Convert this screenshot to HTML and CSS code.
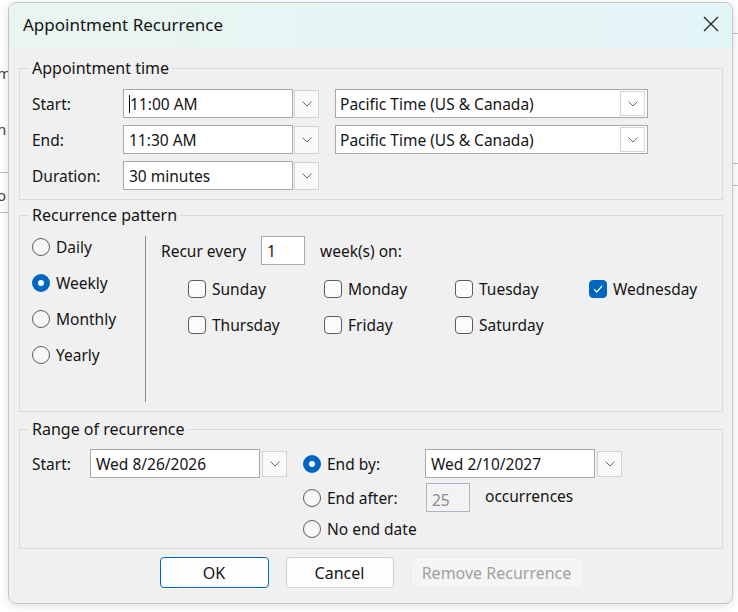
FILE: index.html
```html
<!DOCTYPE html>
<html lang="en">
<head>
    <meta charset="UTF-8">
    <meta name="viewport" content="width=device-width, initial-scale=1.0">
    <title>Appointment Recurrence</title>
    <link rel="stylesheet" href="styles.css">
</head>
<body>
    <!-- bits of the Outlook window behind the dialog -->
    <div class="backdrop">
        <span class="peek peek-1">m</span>
        <span class="peek peek-2">n</span>
        <span class="peek peek-3">o</span>
        <span class="rule rule-l1"></span>
        <span class="rule rule-l2"></span>
        <span class="rule rule-r1"></span>
        <span class="rule rule-r2"></span>
        <span class="rule rule-r3"></span>
    </div>

    <div class="dialog">
        <div class="titlebar">
            <span class="title">Appointment Recurrence</span>
            <span class="close-btn">
                <svg width="16" height="16" viewBox="0 0 16 16"><path d="M1 1L15 15M15 1L1 15" stroke="#222" stroke-width="1.3" fill="none"/></svg>
            </span>
        </div>

        <div class="dialog-body">
            <fieldset class="group group-time">
                <legend>Appointment time</legend>
                <div class="time-row">
                    <span class="row-label">Start:</span>
                    <span class="field field-time"><span class="caret"></span>11:00 AM</span>
                    <span class="drop-btn"><svg width="10" height="6" viewBox="0 0 10 6"><path d="M0.5 0.5L5 5L9.5 0.5" stroke="#6b6b6b" fill="none"/></svg></span>
                    <span class="tz-combo">Pacific Time (US &amp; Canada)
                        <span class="tz-drop"><svg width="10" height="6" viewBox="0 0 10 6"><path d="M0.5 0.5L5 5L9.5 0.5" stroke="#6b6b6b" fill="none"/></svg></span>
                    </span>
                </div>
                <div class="time-row">
                    <span class="row-label">End:</span>
                    <span class="field field-time">11:30 AM</span>
                    <span class="drop-btn"><svg width="10" height="6" viewBox="0 0 10 6"><path d="M0.5 0.5L5 5L9.5 0.5" stroke="#6b6b6b" fill="none"/></svg></span>
                    <span class="tz-combo">Pacific Time (US &amp; Canada)
                        <span class="tz-drop"><svg width="10" height="6" viewBox="0 0 10 6"><path d="M0.5 0.5L5 5L9.5 0.5" stroke="#6b6b6b" fill="none"/></svg></span>
                    </span>
                </div>
                <div class="time-row">
                    <span class="row-label">Duration:</span>
                    <span class="field field-time">30 minutes</span>
                    <span class="drop-btn"><svg width="10" height="6" viewBox="0 0 10 6"><path d="M0.5 0.5L5 5L9.5 0.5" stroke="#6b6b6b" fill="none"/></svg></span>
                </div>
            </fieldset>

            <fieldset class="group group-pattern">
                <legend>Recurrence pattern</legend>
                <div class="pattern">
                    <div class="pattern-kinds">
                        <span class="radio-row"><span class="radio"></span>Daily</span>
                        <span class="radio-row"><span class="radio checked"></span>Weekly</span>
                        <span class="radio-row"><span class="radio"></span>Monthly</span>
                        <span class="radio-row"><span class="radio"></span>Yearly</span>
                    </div>
                    <div class="divider"></div>
                    <div class="pattern-detail">
                        <div class="recur-row">
                            <span class="recur-label">Recur every</span>
                            <span class="field field-small">1</span>
                            <span class="recur-unit">week(s) on:</span>
                        </div>
                        <div class="days">
                            <span class="check-row"><span class="checkbox"></span>Sunday</span>
                            <span class="check-row"><span class="checkbox"></span>Monday</span>
                            <span class="check-row"><span class="checkbox"></span>Tuesday</span>
                            <span class="check-row"><span class="checkbox checked"><svg width="12" height="10" viewBox="0 0 12 10"><path d="M2 5.2L4.8 8L10 2" stroke="#fff" stroke-width="1.2" fill="none"/></svg></span>Wednesday</span>
                            <span class="check-row"><span class="checkbox"></span>Thursday</span>
                            <span class="check-row"><span class="checkbox"></span>Friday</span>
                            <span class="check-row"><span class="checkbox"></span>Saturday</span>
                        </div>
                    </div>
                </div>
            </fieldset>

            <fieldset class="group group-range">
                <legend>Range of recurrence</legend>
                <div class="range">
                    <div class="range-start">
                        <span class="range-label">Start:</span>
                        <span class="field field-date">Wed 8/26/2026</span>
                        <span class="drop-btn drop-date"><svg width="10" height="6" viewBox="0 0 10 6"><path d="M0.5 0.5L5 5L9.5 0.5" stroke="#6b6b6b" fill="none"/></svg></span>
                    </div>
                    <div class="range-end">
                        <div class="end-row">
                            <span class="radio-row end-choice"><span class="radio checked"></span>End by:</span>
                            <span class="field field-date">Wed 2/10/2027</span>
                            <span class="drop-btn drop-date"><svg width="10" height="6" viewBox="0 0 10 6"><path d="M0.5 0.5L5 5L9.5 0.5" stroke="#6b6b6b" fill="none"/></svg></span>
                        </div>
                        <div class="end-row">
                            <span class="radio-row end-choice"><span class="radio"></span>End after:</span>
                            <span class="field field-count">25</span>
                            <span class="count-unit">occurrences</span>
                        </div>
                        <div class="end-row end-row-last">
                            <span class="radio-row end-choice"><span class="radio"></span>No end date</span>
                        </div>
                    </div>
                </div>
            </fieldset>

            <div class="buttons">
                <button class="btn btn-default">OK</button>
                <button class="btn">Cancel</button>
                <button class="btn btn-disabled">Remove Recurrence</button>
            </div>
        </div>
    </div>
</body>
</html>
```

FILE: styles.css
```css
body {
    margin: 0;
    background: #fff;
    font-family: "Noto Sans", "Open Sans", sans-serif;
    font-size: 15.5px;
    color: #141414;
    width: 738px;
    height: 612px;
    overflow: hidden;
    position: relative;
}
.backdrop .peek {
    position: absolute;
    left: 0;
    width: 8px;
    overflow: hidden;
    color: #444;
    font-size: 15px;
    line-height: 18px;
    text-indent: -3px;
}
.peek-1 { top: 64px; }
.peek-2 { top: 120px; }
.peek-3 { top: 186px; }
.backdrop .rule {
    position: absolute;
    height: 1px;
    background: #bdbdbd;
}
.rule-l1 { top: 172px; left: 0; width: 10px; }
.rule-l2 { top: 212px; left: 0; width: 10px; background: #d8d8d8; }
.rule-r1 { top: 33px; left: 730px; width: 8px; }
.rule-r2 { top: 163px; left: 730px; width: 8px; background: #d8d8d8; }
.rule-r3 { top: 185px; left: 730px; width: 8px; }

.dialog {
    position: absolute;
    left: 8px;
    top: 2px;
    width: 725px;
    height: 602px;
    box-sizing: border-box;
    background: #f0f0f0;
    border: 1px solid #c6c6c6;
    border-radius: 8px;
    box-shadow: 0 2px 10px rgba(0, 0, 0, 0.12);
    overflow: hidden;
}
.titlebar {
    height: 45px;
    display: flex;
    align-items: center;
    justify-content: space-between;
    padding: 0 14px;
    background: linear-gradient(90deg, #e9f5f1, #e3f4f7);
}
.title {
    font-size: 17px;
    margin-top: -2px;
}
.close-btn {
    display: flex;
    margin-right: -1px;
    margin-top: -3px;
}
.dialog-body {
    padding: 0 9px 0 10px;
}

.group {
    margin: 0;
    border: 1px solid #dadada;
    padding: 0 12px;
    min-width: 0;
}
.group legend {
    padding: 0 3px;
    margin-left: -3px;
    line-height: 20px;
    font-size: 16px;
}
.group-time {
    margin-top: 10px;
    padding-top: 11px;
    padding-bottom: 9px;
    display: flex;
    flex-direction: column;
    gap: 7px;
}
.group-pattern {
    margin-top: 5px;
    padding-top: 11px;
    padding-bottom: 9px;
}
.group-range {
    margin-top: 7px;
    padding-top: 10px;
    padding-bottom: 8px;
}

.time-row {
    display: flex;
    align-items: center;
    height: 29px;
}
.row-label {
    width: 91px;
}
.field {
    box-sizing: border-box;
    height: 29px;
    display: flex;
    align-items: center;
    background: #fff;
    border: 1px solid #a9a9a9;
    padding-left: 5px;
}
.field-time {
    width: 170px;
}
.caret {
    width: 1px;
    height: 18px;
    background: #111;
}
.drop-btn {
    box-sizing: border-box;
    width: 25px;
    height: 28px;
    margin-left: 1px;
    display: flex;
    align-items: center;
    justify-content: center;
    background: #f9f9f9;
    border: 1px solid #d2d2d2;
}
.tz-combo {
    box-sizing: border-box;
    width: 313px;
    height: 29px;
    margin-left: 16px;
    display: flex;
    align-items: center;
    justify-content: space-between;
    padding: 0 2px 0 4px;
    background: #fff;
    border: 1px solid #a9a9a9;
}
.tz-drop {
    box-sizing: border-box;
    width: 25px;
    height: 25px;
    display: flex;
    align-items: center;
    justify-content: center;
    border: 1px solid #cdd6e0;
}

.pattern {
    display: flex;
}
.pattern-kinds {
    width: 113px;
    display: flex;
    flex-direction: column;
    gap: 14px;
}
.radio-row {
    display: flex;
    align-items: center;
    height: 22px;
    gap: 6px;
}
.radio {
    box-sizing: border-box;
    width: 18px;
    height: 18px;
    border-radius: 50%;
    border: 1px solid #5c5c5c;
    background: #f7f7f7;
    flex: none;
}
.radio.checked {
    border: 6px solid #0067c0;
    background: #fff;
}
.divider {
    width: 1px;
    height: 166px;
    background: #8a8a8a;
}
.pattern-detail {
    padding-left: 15px;
}
.recur-row {
    display: flex;
    align-items: center;
    height: 29px;
}
.recur-label {
    width: 100px;
}
.field-small {
    width: 44px;
}
.recur-unit {
    margin-left: 15px;
}
.days {
    display: grid;
    grid-template-columns: 136px 131px 134px auto;
    row-gap: 14px;
    margin: 13px 0 0 27px;
}
.check-row {
    display: flex;
    align-items: center;
    height: 22px;
    gap: 6px;
}
.checkbox {
    box-sizing: border-box;
    width: 18px;
    height: 18px;
    border: 1px solid #5c5c5c;
    border-radius: 4px;
    background: #fbfbfb;
    flex: none;
    display: flex;
    align-items: center;
    justify-content: center;
}
.checkbox.checked {
    background: #0067c0;
    border-color: #0067c0;
}

.range {
    display: flex;
    align-items: flex-start;
}
.range-start {
    display: flex;
    align-items: center;
}
.range-label {
    width: 58px;
}
.field-date {
    width: 170px;
}
.drop-date {
    margin-left: 2px;
    height: 26px;
}
.range-end {
    margin-left: 16px;
    display: flex;
    flex-direction: column;
    gap: 5px;
}
.end-row {
    display: flex;
    align-items: center;
    height: 29px;
}
.end-row-last {
    height: 22px;
    margin-top: 1px;
}
.end-choice {
    width: 122px;
}
.field-count {
    width: 44px;
    background: #f3f3f3;
    border-color: #a6b6c6;
    color: #8c8c8c;
    margin-left: 1px;
    padding-top: 4px;
}
.count-unit {
    margin-left: 15px;
    margin-top: -4px;
}

.buttons {
    display: flex;
    justify-content: center;
    gap: 17px;
    margin-top: 8px;
}
.btn {
    box-sizing: border-box;
    height: 31px;
    width: 108px;
    font-family: inherit;
    font-size: 16px;
    color: #141414;
    background: #fdfdfd;
    border: 1px solid #d0d0d0;
    border-radius: 4px;
}
.btn-default {
    width: 109px;
    border: 1.5px solid #0067c0;
}
.btn-disabled {
    width: 172px;
    color: #a0a0a0;
    background: #f5f5f5;
    border-color: #ececec;
}
```
